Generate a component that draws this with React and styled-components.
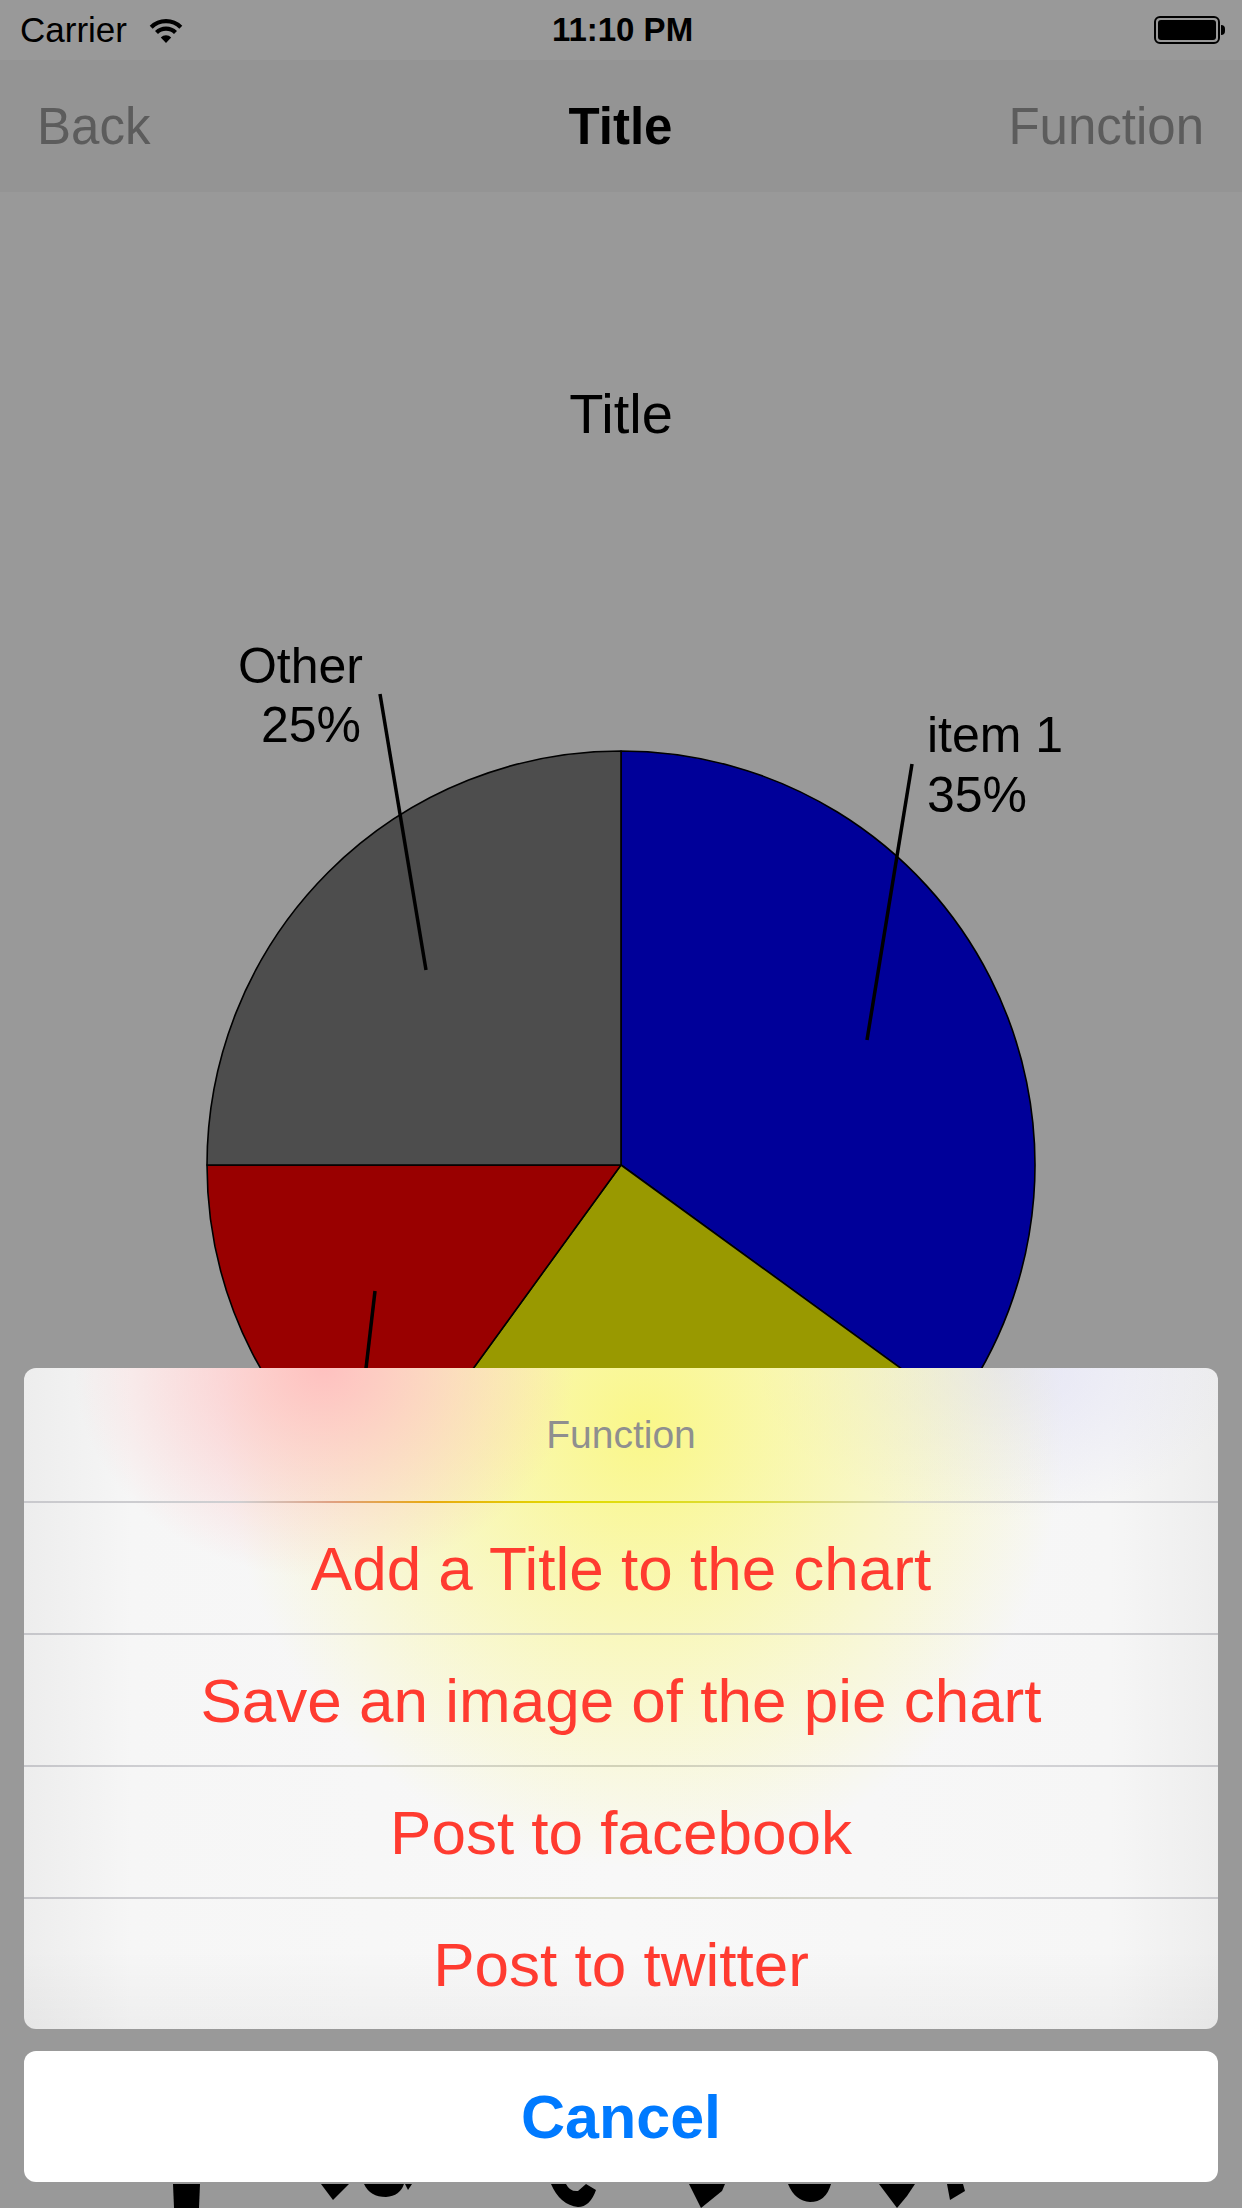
import React from 'react';
import styled, { createGlobalStyle } from 'styled-components';

// slices go clockwise from 12 o'clock
const slices = [
  { label: 'item 1', value: 35, color: '#0000ff' },
  { label: 'item 2', value: 25, color: '#ffff00' },
  { label: 'item 3', value: 15, color: '#ff0000' },
  { label: 'Other', value: 25, color: '#808080' }
];

const actions = [
  'Add a Title to the chart',
  'Save an image of the pie chart',
  'Post to facebook',
  'Post to twitter'
];

const CX = 621;
const CY = 1165;
const R = 414;

const point = (deg) => {
  const a = (deg * Math.PI) / 180;
  return [CX + R * Math.sin(a), CY - R * Math.cos(a)];
};

const slicePaths = () => {
  let start = 0;
  return slices.map((s) => {
    const end = start + (s.value / 100) * 360;
    const [x1, y1] = point(start);
    const [x2, y2] = point(end);
    const large = end - start > 180 ? 1 : 0;
    const d = `M${CX} ${CY} L${x1} ${y1} A${R} ${R} 0 ${large} 1 ${x2} ${y2} Z`;
    start = end;
    return { ...s, d };
  });
};

const GlobalStyle = createGlobalStyle`
  html, body {
    margin: 0;
    padding: 0;
  }
  body {
    width: 1242px;
    height: 2208px;
    overflow: hidden;
    background: #999;
    font-family: "Liberation Sans", Arial, sans-serif;
  }
`;

const Screen = styled.div`
  position: relative;
  width: 1242px;
  height: 2208px;
  background: #fff;
  display: flex;
  flex-direction: column;
  overflow: hidden;
`;

const StatusBar = styled.div`
  height: 60px;
  display: grid;
  grid-template-columns: 1fr auto 1fr;
  align-items: center;
  padding: 0 17px 0 20px;
  font-size: 35px;
  color: #000;
`;

const Carrier = styled.div`
  display: flex;
  align-items: center;
  gap: 20px;
`;

const Clock = styled.div`
  font-weight: bold;
  font-size: 33px;
`;

const BatteryWrap = styled.div`
  justify-self: end;
  display: flex;
  align-items: center;
  gap: 1px;
`;

const BatteryBody = styled.div`
  width: 66px;
  height: 28px;
  box-sizing: border-box;
  border: 2px solid #000;
  border-radius: 6px;
  padding: 2px;
  display: flex;
`;

const BatteryFill = styled.div`
  flex: 1;
  background: #000;
  border-radius: 3px;
`;

const BatteryNub = styled.div`
  width: 4px;
  height: 10px;
  background: #000;
  border-radius: 0 4px 4px 0;
`;

const NavBar = styled.div`
  height: 132px;
  background: #f7f7f7;
  display: grid;
  grid-template-columns: 1fr auto 1fr;
  align-items: center;
  padding: 0 38px 0 37px;
  font-size: 51px;
`;

const NavButton = styled.div`
  color: #999;
  justify-self: ${(p) => (p.$right ? 'end' : 'start')};
`;

const NavTitle = styled.div`
  font-weight: bold;
  color: #000;
`;

const Chart = styled.div`
  flex: 1;
  background: #fff;
  svg {
    display: block;
  }
`;

const Dim = styled.div`
  position: absolute;
  inset: 0;
  background: rgba(0, 0, 0, 0.4);
`;

const Sheet = styled.div`
  position: absolute;
  left: 0;
  right: 0;
  bottom: 0;
  padding: 0 24px 26px;
  display: flex;
  flex-direction: column;
  gap: 22px;
`;

const Group = styled.div`
  border-radius: 12px;
  overflow: hidden;
  background:
    radial-gradient(ellipse 250px 210px at 300px 0px, rgba(255, 190, 190, 0.95), rgba(255, 190, 190, 0) 100%),
    radial-gradient(ellipse 420px 440px at 620px 60px, rgba(250, 247, 125, 0.9), rgba(250, 247, 125, 0) 100%),
    radial-gradient(ellipse 240px 150px at 975px 0px, rgba(222, 222, 245, 0.7), rgba(222, 222, 245, 0) 100%),
    linear-gradient(to bottom, rgba(0, 0, 0, 0) 88%, rgba(0, 0, 0, 0.03)),
    linear-gradient(to right, #ededed, #f6f6f6 9%, #f8f8f8 50%, #f6f6f6 91%, #ededed);
`;

const SheetTitle = styled.div`
  height: 133px;
  display: flex;
  align-items: center;
  justify-content: center;
  font-size: 39px;
  color: #8f8f8f;
`;

const Separator = styled.div`
  height: 2px;
  background: ${(p) =>
    p.$tinted
      ? 'linear-gradient(to right, #c9c9cd, #cfcfd2 18%, #e0a080 26%, #e8aa10 34%, #e2dc00 46%, #dcdc40 62%, #d6d6c8 74%, #cbcbcf 88%, #c9c9cd)'
      : 'linear-gradient(to right, #c6c6ca, #d6d6d9 20%, #d2d2b8 50%, #d6d6d9 80%, #c6c6ca)'};
`;

const Action = styled.div`
  height: 130px;
  display: flex;
  align-items: center;
  justify-content: center;
  font-size: 62px;
  color: #ff3b30;
`;

const Cancel = styled.div`
  height: 131px;
  border-radius: 12px;
  background: #fff;
  display: flex;
  align-items: center;
  justify-content: center;
  font-size: 61px;
  font-weight: bold;
  color: #007aff;
`;

function Wifi() {
  return (
    <svg width="38" height="28" viewBox="0 0 38 28">
      <g fill="none" stroke="#000" strokeWidth="4.2">
        <path d="M4.2 11.2 A21 21 0 0 1 33.8 11.2" />
        <path d="M9.5 16.5 A13.4 13.4 0 0 1 28.5 16.5" />
      </g>
      <path d="M19 27 L13.8 21.4 A7.2 7.2 0 0 1 24.2 21.4 Z" fill="#000" />
    </svg>
  );
}

function PieChart() {
  const paths = slicePaths();
  return (
    <svg width="1242" height="2016" viewBox="0 192 1242 2016">
      <text x="621" y="433" textAnchor="middle" fontSize="56" fontFamily="Liberation Sans, Arial, sans-serif">
        Title
      </text>
      {paths.map((s) => (
        <path key={s.label} d={s.d} fill={s.color} stroke="#000" strokeWidth="1.6" strokeLinejoin="round" />
      ))}
      <g stroke="#000" strokeWidth="3.5" strokeLinecap="butt">
        <line x1="380" y1="694" x2="426" y2="970" />
        <line x1="912" y1="764" x2="867" y2="1040" />
        <line x1="375" y1="1291" x2="360" y2="1420" />
        <line x1="664" y1="1438" x2="680" y2="1560" />
      </g>
      <g fontSize="50" fontFamily="Liberation Sans, Arial, sans-serif" fill="#000">
        <text x="363" y="683" textAnchor="end">Other</text>
        <text x="361" y="742" textAnchor="end">25%</text>
        <text x="927" y="752">item 1</text>
        <text x="927" y="812">35%</text>
      </g>
      {/* bits of the chart that peek out below the sheet */}
      <g fill="#000">
        <path d="M173 2184 L200 2184 L199 2208 L174 2208 Z" />
        <path d="M321 2184 L349 2184 L333 2200 Z" />
        <path d="M364 2184 Q370 2197 386 2197 Q400 2196 404 2184 Z" />
        <path d="M405 2184 L412 2184 L408 2190 Z" />
        <path d="M551 2184 L566 2184 Q570 2192 578 2191 L586 2184 L596 2190 Q590 2207 578 2207 Q560 2205 551 2184 Z" />
        <path d="M689 2184 L725 2184 L722 2191 L701 2208 Z" />
        <path d="M788 2184 L831 2184 Q826 2202 810 2202 Q795 2201 788 2184 Z" />
        <path d="M879 2184 L915 2184 L907 2196 L897 2208 Z" />
        <path d="M947 2184 L963 2184 L965 2191 L950 2200 Z" />
      </g>
    </svg>
  );
}

export default function App() {
  return (
    <>
      <GlobalStyle />
      <Screen>
        <StatusBar>
          <Carrier>
            Carrier
            <Wifi />
          </Carrier>
          <Clock>11:10 PM</Clock>
          <BatteryWrap>
            <BatteryBody>
              <BatteryFill />
            </BatteryBody>
            <BatteryNub />
          </BatteryWrap>
        </StatusBar>
        <NavBar>
          <NavButton>Back</NavButton>
          <NavTitle>Title</NavTitle>
          <NavButton $right>Function</NavButton>
        </NavBar>
        <Chart>
          <PieChart />
        </Chart>
        <Dim />
        <Sheet>
          <Group>
            <SheetTitle>Function</SheetTitle>
            {actions.map((a, i) => (
              <React.Fragment key={a}>
                <Separator $tinted={i === 0} />
                <Action>{a}</Action>
              </React.Fragment>
            ))}
          </Group>
          <Cancel>Cancel</Cancel>
        </Sheet>
      </Screen>
    </>
  );
}
